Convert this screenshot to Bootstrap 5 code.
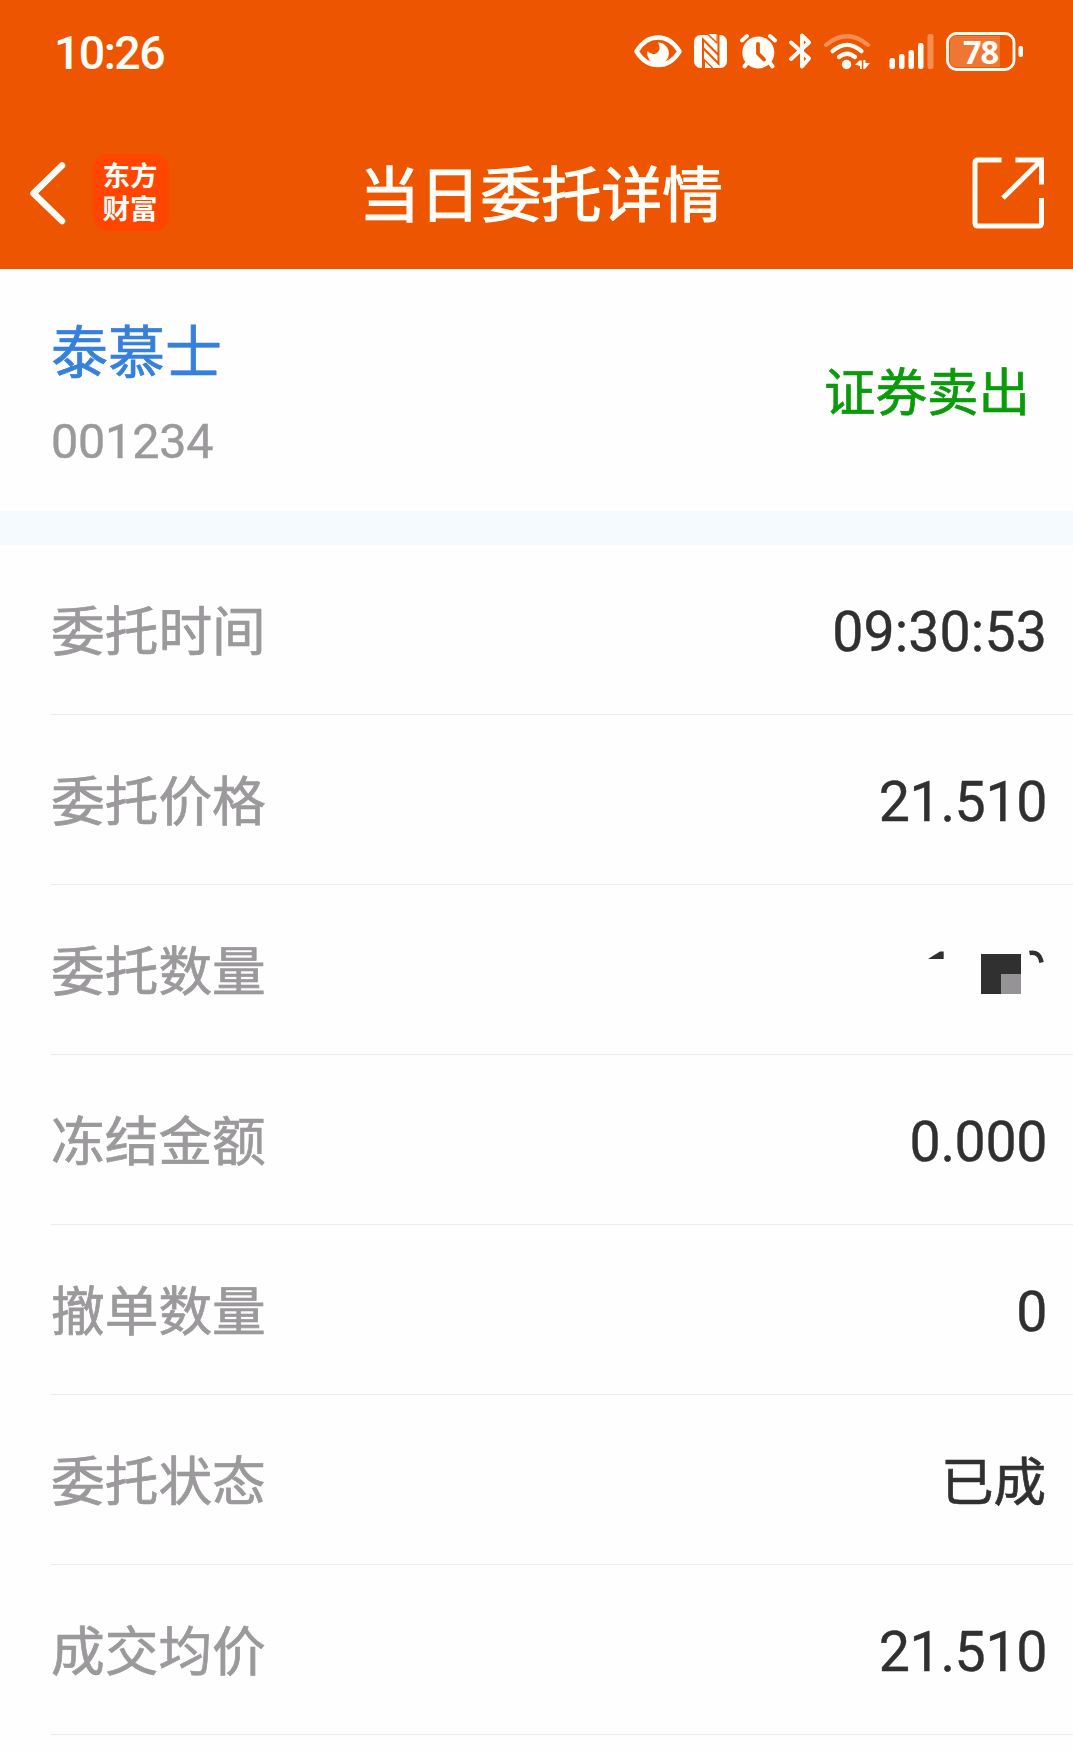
<!DOCTYPE html>
<html lang="zh-CN">
<head>
<meta charset="utf-8">
<meta name="viewport" content="width=device-width, initial-scale=1">
<title>当日委托详情</title>
<link href="https://cdn.jsdelivr.net/npm/bootstrap@5.3.0/dist/css/bootstrap.min.css" rel="stylesheet">
<style>
body{background:#fefefe;font-family:"Noto Sans CJK SC",sans-serif;color:#303030;overflow-x:hidden}
svg{display:block;flex:none}
.app-head{background:#ed5500;height:269px;color:#fffdf8}
.status{height:104px;padding:0 47px 0 54px}
.clock{font:500 46.5px/54px Roboto,sans-serif;letter-spacing:-1.6px;padding-top:2px}
.ico-nfc{margin-left:6px}
.ico-alarm{margin-left:7px}
.ico-bt{margin-left:5px}
.ico-wifi{margin-left:6px}
.ico-signal{margin-left:13px}
.ico-batt{margin-left:6px}
.topbar{height:153px;margin-top:12px}
.side-l{width:175px;padding-left:27px}
.side-r{width:166px;padding-right:26px}
.brand{width:76px;height:77px;border-radius:15px;background:#ff4500;font-size:27.5px;line-height:33px;font-weight:700;margin-left:26px;padding:4px 2px 0 0}
.page-title{font-size:60.6px;line-height:70px;font-weight:400;-webkit-text-stroke:1.2px #fffdf8;margin-bottom:4px;white-space:nowrap}
.stock{height:242px;padding:0 43px 0 51px}
.stock-name{font-size:57px;line-height:66px;color:#3680dc;-webkit-text-stroke:.7px #3680dc}
.stock-code{font:400 48.5px/56px Roboto,sans-serif;color:#9b999b;margin-top:33px;margin-bottom:-4px;letter-spacing:-.2px;-webkit-text-stroke:.4px #9b999b}
.side-tag{font-size:51.5px;line-height:60px;color:#0a9b0a;padding-bottom:3px;-webkit-text-stroke:.7px #0a9b0a}
.band{height:34px;background:#f5faff}
.item{height:170px;margin-left:51px;padding-right:27px;border-bottom:1px solid #ebebeb}
.item-label{font-size:53.7px;line-height:60px;color:#9b999b;padding-bottom:4px;-webkit-text-stroke:.7px #9b999b}
.item-num{font:400 55.5px/64px Roboto,sans-serif;padding-top:7px;letter-spacing:-.4px;-webkit-text-stroke:.4px #303030;margin-right:-1px}
.item-clock{letter-spacing:.1px}
.item-txt{font-size:52.5px;line-height:60px;padding-bottom:4px;-webkit-text-stroke:.7px #303030}
</style>
<script src="https://cdn.jsdelivr.net/npm/bootstrap@5.3.0/dist/js/bootstrap.bundle.min.js"></script>
</head>
<body>
<header class="app-head">
  <div class="status d-flex align-items-center justify-content-between">
    <div class="clock">10:26</div>
    <div class="d-flex align-items-center">
      <svg width="54" height="44" viewBox="630 30 54 44"><path d="M635.5 51.5Q644 37.500 657 37.500Q670 37.500 678.500 51.500Q670 65 657 65Q644 65 635.500 51.500Z" fill="none" stroke="#fffdf8" stroke-width="4.500" stroke-linejoin="round"/><path d="M657 42.500A10.800 10.800 0 1 1 646.500 51Q650 55.500 655 53.500Q661 50 657 42.500Z" fill="#fffdf8"/></svg>
      <svg class="ico-nfc" width="39" height="44" viewBox="690 30 39 44"><rect x="693" y="35" width="33" height="33" rx="6.500" fill="#fffdf8"/><path d="M702 68V39.500L717.500 55M717.500 35V63.500L702 48" fill="none" stroke="#ed5500" stroke-width="2"/><path d="M706.500 35L716.500 44.500V35ZM703 58.500L712.500 68H703Z" fill="#ed5500"/><path d="M707.500 34H715.500V41.500ZM704 61.500L710.500 68H704Z" fill="#fffdf8"/></svg>
      <svg class="ico-alarm" width="44" height="44" viewBox="736 30 44 44"><g fill="none" stroke="#fffdf8" stroke-width="4" stroke-linecap="round"><path d="M741 40.500L746 36M774 40.500L769 36M747.500 61L743.500 66.500M767.500 61L771.500 66.500"/></g><circle cx="757.300" cy="52.500" r="16" fill="#fffdf8"/><path d="M757 44V53.500L763 59.500" fill="none" stroke="#ed5500" stroke-width="3.800" stroke-linecap="round" stroke-linejoin="round"/></svg>
      <svg class="ico-bt" width="29" height="44" viewBox="785 30 29 44"><path d="M790 42.500L808 58.500L801 66.500V35.500L808 42.500L790 59" fill="none" stroke="#fffdf8" stroke-width="4" stroke-linecap="round" stroke-linejoin="round"/></svg>
      <svg class="ico-wifi" width="52" height="44" viewBox="820 30 52 44"><g fill="none" stroke="#fffdf8" stroke-width="4.200" stroke-linecap="round"><path d="M825 45Q846 27.500 867 45" opacity=".34"/><path d="M831.500 51.200Q846 38.500 860.500 51.200M838 57Q846 50.500 854 57"/></g><circle cx="845.500" cy="64.500" r="4.700" fill="#fffdf8"/><path d="M854 64.500L858.500 60.500H860.800V69H859V66ZM862.300 60V69H864L869 63H864.500V60Z" fill="#fffdf8"/></svg>
      <svg class="ico-signal" width="51" height="44" viewBox="885 30 51 44"><g fill="#fffdf8"><rect x="888.500" y="58" width="5.500" height="11" rx="2.300"/><rect x="898" y="54" width="5.500" height="15" rx="2.300"/><rect x="907.500" y="50" width="5.500" height="19" rx="2.300"/><rect x="917" y="43" width="5.500" height="26" rx="2.300"/><rect x="926.500" y="34" width="6" height="35" rx="2.300" opacity=".34"/></g></svg>
      <svg class="ico-batt" width="83" height="44" viewBox="942 30 83 44"><path d="M955 36H999V67H955Q949 67 949 60V43Q949 36 955 36Z" fill="#fff" opacity=".2"/><rect x="946.500" y="33.500" width="66.500" height="36" rx="9" fill="none" stroke="#fffdf8" stroke-width="2.800"/><rect x="1017.500" y="46" width="4.500" height="11" rx="2" fill="#fffdf8"/><text x="979.500" y="63.700" text-anchor="middle" font-family="Noto Sans, sans-serif" font-weight="700" font-size="32.500" letter-spacing="-1" fill="#fffdf8">78</text></svg>
    </div>
  </div>
  <nav class="topbar d-flex align-items-center">
    <div class="side-l d-flex align-items-center">
      <svg width="40" height="64" viewBox="28 160 40 64"><path d="M63 164.500L34.500 192.300L63 220" fill="none" stroke="#fffdf8" stroke-width="6.500" stroke-linecap="round" stroke-linejoin="round"/></svg>
      <div class="brand text-center">东方<br>财富</div>
    </div>
    <div class="page-title flex-grow-1 text-center">当日委托详情</div>
    <div class="side-r d-flex justify-content-end">
      <svg width="76" height="76" viewBox="970 155 76 76"><g fill="none" stroke="#fffdf8" stroke-width="5"><path d="M1000.500 160H977Q974 160 974 163V223Q974 226 977 226H1037.500Q1040.500 226 1040.500 223V198"/><path d="M1014.500 160H1040.500V184.500M1039.500 161L1002 198"/></g></svg>
    </div>
  </nav>
</header>
<section class="stock d-flex align-items-center justify-content-between">
  <div>
    <div class="stock-name">泰慕士</div>
    <div class="stock-code">001234</div>
  </div>
  <div class="side-tag">证券卖出</div>
</section>
<div class="band"></div>
<main>
  <div class="item d-flex align-items-center justify-content-between"><div class="item-label">委托时间</div><div class="item-num item-clock">09:30:53</div></div>
  <div class="item d-flex align-items-center justify-content-between"><div class="item-label">委托价格</div><div class="item-num">21.510</div></div>
  <div class="item d-flex align-items-center justify-content-between"><div class="item-label">委托数量</div>
    <svg width="120" height="60" viewBox="925 940 120 60"><path d="M927 959L939 951.500H942.700V959Z" fill="#303030"/><path d="M980 954H1020V994H980Z" fill="#303030"/><path d="M1000 974H1020V994H1000Z" fill="#959396"/><path d="M1028.500 953Q1038.500 951 1040.500 962.500" fill="none" stroke="#303030" stroke-width="4.500"/></svg>
  </div>
  <div class="item d-flex align-items-center justify-content-between"><div class="item-label">冻结金额</div><div class="item-num">0.000</div></div>
  <div class="item d-flex align-items-center justify-content-between"><div class="item-label">撤单数量</div><div class="item-num">0</div></div>
  <div class="item d-flex align-items-center justify-content-between"><div class="item-label">委托状态</div><div class="item-txt">已成</div></div>
  <div class="item d-flex align-items-center justify-content-between"><div class="item-label">成交均价</div><div class="item-num">21.510</div></div>
</main>
</body>
</html>
